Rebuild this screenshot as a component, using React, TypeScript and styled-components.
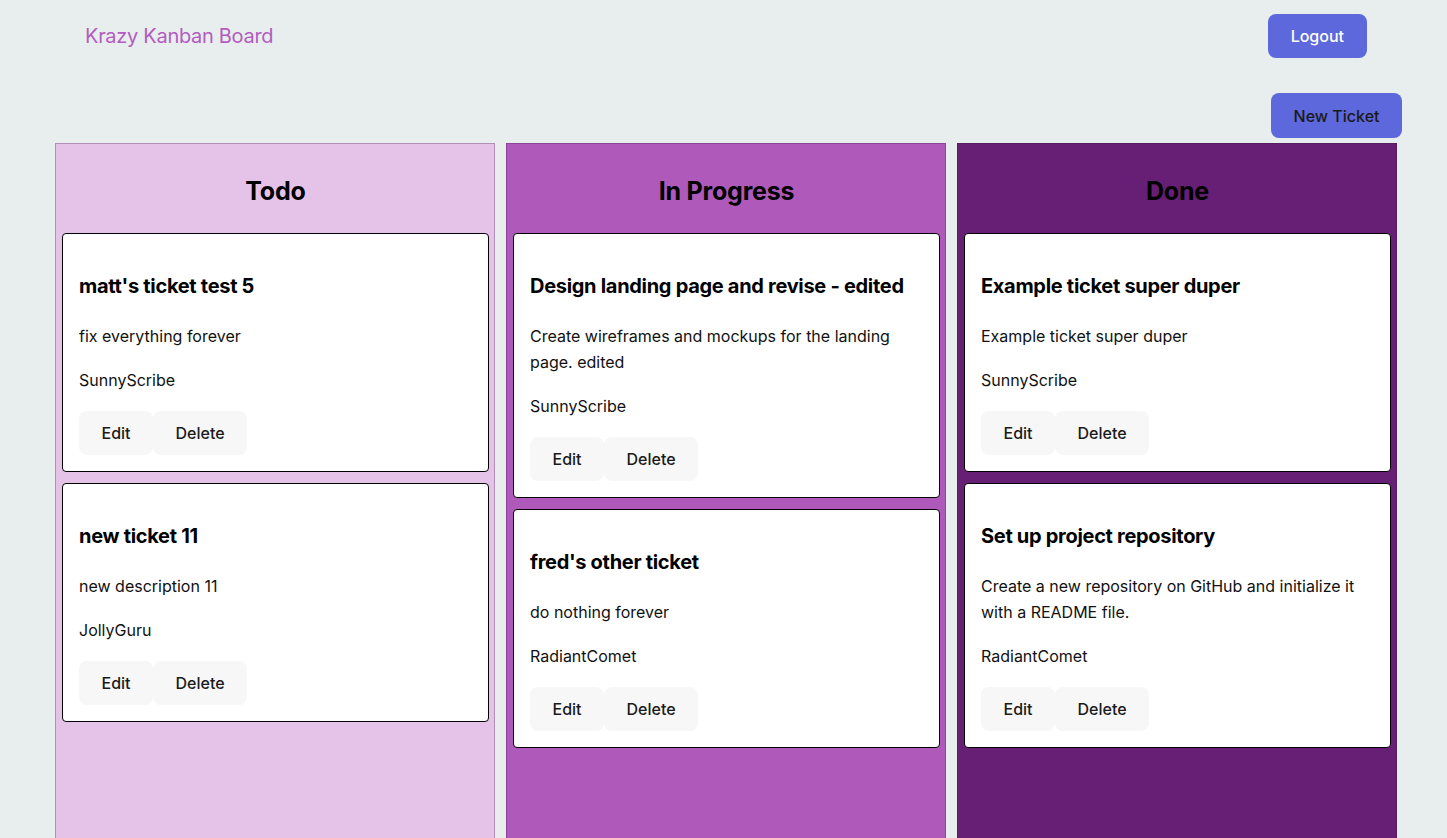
import React from 'react';
import styled, { createGlobalStyle } from 'styled-components';

const GlobalStyle = createGlobalStyle`
  html, body {
    margin: 0;
    padding: 0;
    background: #e8eeee;
    font-family: Inter, "Noto Sans", system-ui, sans-serif;
    line-height: 1.5;
    color: #111;
    overflow: hidden;
  }
`;

interface Ticket {
  id: number;
  name: string;
  description: string;
  user: string;
}

interface ColumnData {
  title: string;
  tickets: Ticket[];
}

const columns: ColumnData[] = [
  {
    title: 'Todo',
    tickets: [
      { id: 1, name: "matt's ticket test 5", description: 'fix everything forever', user: 'SunnyScribe' },
      { id: 2, name: 'new ticket 11', description: 'new description 11', user: 'JollyGuru' },
    ],
  },
  {
    title: 'In Progress',
    tickets: [
      {
        id: 3,
        name: 'Design landing page and revise - edited',
        description: 'Create wireframes and mockups for the landing page. edited',
        user: 'SunnyScribe',
      },
      { id: 4, name: "fred's other ticket", description: 'do nothing forever', user: 'RadiantComet' },
    ],
  },
  {
    title: 'Done',
    tickets: [
      {
        id: 5,
        name: 'Example ticket super duper',
        description: 'Example ticket super duper',
        user: 'SunnyScribe',
      },
      {
        id: 6,
        name: 'Set up project repository',
        description: 'Create a new repository on GitHub and initialize it with a README file.',
        user: 'RadiantComet',
      },
    ],
  },
];

const columnColors: Record<string, string> = {
  Todo: '#e5c3e9',
  'In Progress': '#af5abb',
  Done: '#661f74',
};

const Page = styled.div`
  width: 1447px;
`;

const Nav = styled.header`
  display: flex;
  justify-content: space-between;
  align-items: flex-start;
  padding: 14px 80px 0 85px;
  height: 79px;
  box-sizing: border-box;
`;

const Logo = styled.a`
  color: #b35cc0;
  font-size: 20px;
  letter-spacing: -0.3px;
  line-height: 30px;
  margin-top: 7px;
  text-decoration: none;
  cursor: pointer;
`;

const PrimaryButton = styled.button<{ $light?: boolean }>`
  background: #5d68dc;
  color: ${(p) => (p.$light ? '#ffffff' : '#1a1a1a')};
  border: 1px solid transparent;
  border-radius: 8px;
  font-family: inherit;
  font-size: 16px;
  font-weight: 500;
  line-height: 24px;
  padding: 9px 22px;
  cursor: pointer;
`;

const Toolbar = styled.div`
  display: flex;
  justify-content: flex-end;
  padding-right: 45px;
  margin-top: 14px;
`;

const NewTicketButton = styled(PrimaryButton)`
  padding: 10px 21.5px 9px;
`;

const Board = styled.main`
  display: grid;
  grid-template-columns: repeat(3, 440px);
  gap: 11px;
  padding-left: 55px;
  margin-top: 5px;
`;

const Column = styled.section<{ $bg: string }>`
  background: ${(p) => p.$bg};
  border: 1px solid rgba(60, 20, 70, 0.3);
  min-height: 720px;
  box-sizing: border-box;
  padding: 0 5px 0 6px;
  display: flex;
  flex-direction: column;
  gap: 11px;
`;

const ColumnTitle = styled.h2`
  margin: 0;
  text-align: center;
  color: #000;
  font-size: 25px;
  font-weight: 700;
  letter-spacing: -0.2px;
  line-height: 36px;
  padding: 29px 0 13px;
`;

const Card = styled.article`
  background: #ffffff;
  border: 1px solid #000;
  border-radius: 4px;
  padding: 16px;
`;

const CardTitle = styled.h3`
  margin: 21px 0 22px;
  font-size: 20px;
  font-weight: 700;
  letter-spacing: -0.3px;
  line-height: 30px;
  color: #000;
`;

const CardText = styled.p`
  margin: 0 0 18px;
  font-size: 16px;
  line-height: 26px;
  color: #111;
`;

const Actions = styled.div`
  display: flex;
`;

const GhostButton = styled.button`
  background: #f7f7f7;
  color: #1a1a1a;
  border: 1px solid transparent;
  border-radius: 8px;
  font-family: inherit;
  font-size: 16px;
  font-weight: 500;
  line-height: 24px;
  padding: 9px 21.5px;
  cursor: pointer;
`;

const TicketCard: React.FC<{ ticket: Ticket }> = ({ ticket }) => (
  <Card>
    <CardTitle>{ticket.name}</CardTitle>
    <CardText>{ticket.description}</CardText>
    <CardText>{ticket.user}</CardText>
    <Actions>
      <GhostButton>Edit</GhostButton>
      <GhostButton>Delete</GhostButton>
    </Actions>
  </Card>
);

export default function App() {
  return (
    <Page>
      <GlobalStyle />
      <Nav>
        <Logo>Krazy Kanban Board</Logo>
        <PrimaryButton $light>Logout</PrimaryButton>
      </Nav>
      <Toolbar>
        <NewTicketButton>New Ticket</NewTicketButton>
      </Toolbar>
      <Board>
        {columns.map((col) => (
          <Column key={col.title} $bg={columnColors[col.title]}>
            <ColumnTitle>{col.title}</ColumnTitle>
            {col.tickets.map((t) => (
              <TicketCard key={t.id} ticket={t} />
            ))}
          </Column>
        ))}
      </Board>
    </Page>
  );
}
